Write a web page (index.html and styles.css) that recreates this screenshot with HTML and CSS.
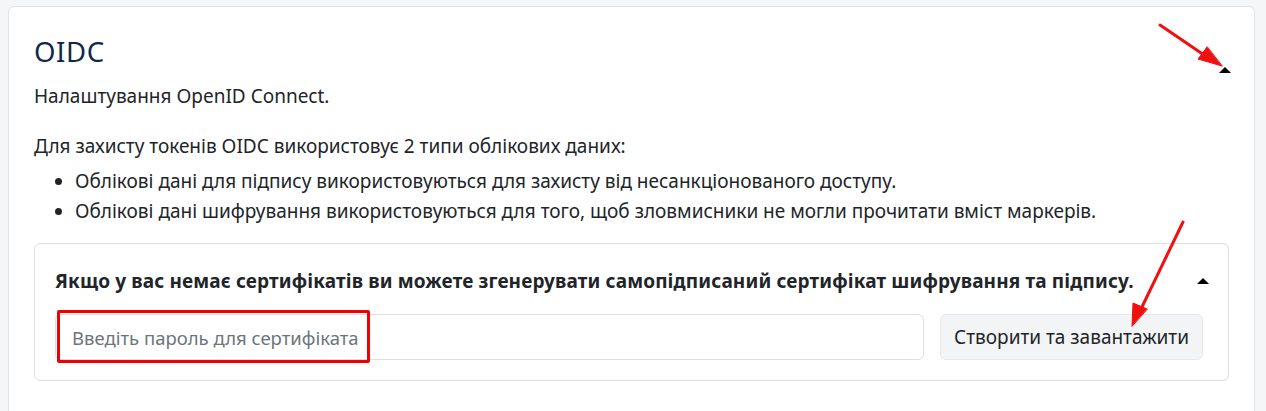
FILE: index.html
```html
<!DOCTYPE html>
<html lang="uk">
<head>
<meta charset="utf-8">
<link rel="stylesheet" href="styles.css">
</head>
<body>
<div class="card">
  <div class="card-head">
    <h2 class="title">OIDC</h2>
    <span class="caret caret-main"></span>
  </div>
  <p class="lead">Налаштування OpenID Connect.</p>
  <p class="intro">Для захисту токенів OIDC використовує 2 типи облікових даних:</p>
  <ul class="list">
    <li>Облікові дані для підпису використовуються для захисту від несанкціонованого доступу.</li>
    <li>Облікові дані шифрування використовуються для того, щоб зловмисники не могли прочитати вміст маркерів.</li>
  </ul>
  <div class="sub">
    <div class="sub-head">
      <span class="sub-title">Якщо у вас немає сертифікатів ви можете згенерувати самопідписаний сертифікат шифрування та підпису.</span>
      <span class="caret caret-sub"></span>
    </div>
    <div class="form-row">
      <div class="input-wrap">
        <input class="input" type="password" placeholder="Введіть пароль для сертифіката">
        <span class="highlight"></span>
      </div>
      <button class="btn">Створити та завантажити</button>
    </div>
  </div>
</div>
<svg class="arrows" width="1266" height="411" viewBox="0 0 1266 411">
  <g stroke="#f01010" stroke-width="3" stroke-linecap="round" fill="#f01010">
    <line x1="1160" y1="25" x2="1207" y2="57"/>
    <polygon points="1222,66 1198,59 1207,47" stroke-width="1"/>
    <line x1="1183" y1="222" x2="1141" y2="309"/>
    <polygon points="1132,326 1133,303 1147,309" stroke-width="1"/>
  </g>
</svg>
</body>
</html>
```
FILE: styles.css
```css
* { box-sizing: border-box; }
html, body { margin: 0; }
body {
  background: #f5f6f8;
  font-family: "Noto Sans", "Open Sans", sans-serif;
  color: #212529;
  padding: 6px 11px 0 8px;
  height: 411px;
  overflow: hidden;
}
.card {
  background: #fff;
  border: 1px solid #e1e4e8;
  border-radius: 6px;
  padding: 27px 25px 40px 25px;
  min-height: 420px;
}
.card-head {
  display: flex;
  justify-content: space-between;
  align-items: flex-start;
}
.title {
  margin: 0;
  font-family: "Noto Sans", sans-serif;
  font-weight: 400;
  font-size: 27.5px;
  line-height: 36px;
  color: #10294a;
  letter-spacing: 0.6px;
}
.caret {
  width: 0; height: 0;
  border-left: 6px solid transparent;
  border-right: 6px solid transparent;
  border-bottom: 6px solid #000;
}
.caret-main { margin-top: 33px; margin-right: -2px; }
.caret-sub { margin-right: -6px; }
.lead {
  margin: 8px 0 0;
  font-size: 19px;
  line-height: 30px;
}
.intro {
  margin: 20px 0 0;
  font-size: 19px;
  line-height: 30px;
}
.list {
  margin: 5px 0 0;
  padding-left: 41px;
  font-size: 19px;
  line-height: 30px;
}
.sub {
  margin-top: 17px;
  border: 1px solid #dcdfe3;
  border-radius: 6px;
  padding: 22px 25px 20px 20px;
}
.sub-head {
  display: flex;
  justify-content: space-between;
  align-items: center;
}
.sub-title {
  font-weight: 700;
  font-size: 19px;
  line-height: 30px;
  letter-spacing: 0.14px;
}
.form-row {
  display: flex;
  gap: 16px;
  margin-top: 18px;
}
.input-wrap {
  position: relative;
  flex: 1;
}
.input {
  width: 100%;
  height: 46px;
  border: 1px solid #dcdfe3;
  border-radius: 6px;
  padding: 0 16px;
  font-family: inherit;
  font-size: 18.5px;
  color: #212529;
  background: #fff;
}
.input::placeholder { color: #6c757d; }
.highlight {
  position: absolute;
  left: 2px; top: -4px;
  width: 313px; height: 53px;
  border: 3px solid #f00000;
  border-radius: 2px;
  pointer-events: none;
}
.btn {
  height: 46px;
  padding: 0 13px;
  background: #f3f4f6;
  border: 1px solid #e5e7eb;
  border-radius: 6px;
  font-family: inherit;
  font-size: 19px;
  color: #212529;
}
.arrows {
  position: absolute;
  left: 0; top: 0;
  pointer-events: none;
}
```
